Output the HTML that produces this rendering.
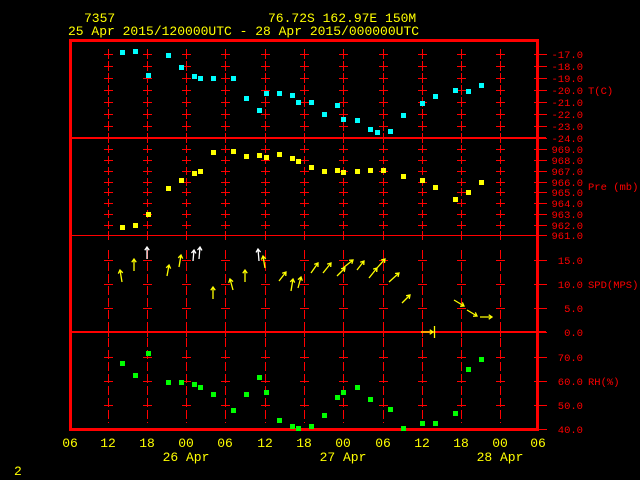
<!DOCTYPE html>
<html><head><meta charset="utf-8"><style>
html,body{margin:0;padding:0;background:#000;width:640px;height:480px;overflow:hidden}
svg{display:block}
text{font-family:"Liberation Mono",monospace}
</style></head><body>
<svg id="s" width="640" height="480" xmlns="http://www.w3.org/2000/svg">
<g id="grid" stroke="#f00" stroke-width="1" shape-rendering="crispEdges"></g>
<g stroke="#f00" fill="none" shape-rendering="crispEdges">
<rect x="70.5" y="40.5" width="467" height="389" stroke-width="3"/>
<line x1="70" y1="138" x2="546" y2="138" stroke-width="2"/>
<line x1="70" y1="235.5" x2="546" y2="235.5"/>
<line x1="70" y1="332" x2="546" y2="332" stroke-width="2"/>
</g>
<g id="pts" shape-rendering="crispEdges"></g>
<g id="arr" stroke-width="1.3" fill="none"></g>
<g font-size="13" fill="#ff0">
<text x="84" y="22">7357</text>
<text x="268" y="22">76.72S  162.97E   150M</text>
<text x="68" y="35">25 Apr 2015/120000UTC - 28 Apr 2015/000000UTC</text>
<text x="70" y="447" text-anchor="middle">06</text>
<text x="108" y="447" text-anchor="middle">12</text>
<text x="147" y="447" text-anchor="middle">18</text>
<text x="186" y="447" text-anchor="middle">00</text>
<text x="225" y="447" text-anchor="middle">06</text>
<text x="265" y="447" text-anchor="middle">12</text>
<text x="304" y="447" text-anchor="middle">18</text>
<text x="343" y="447" text-anchor="middle">00</text>
<text x="383" y="447" text-anchor="middle">06</text>
<text x="422" y="447" text-anchor="middle">12</text>
<text x="461" y="447" text-anchor="middle">18</text>
<text x="500" y="447" text-anchor="middle">00</text>
<text x="538" y="447" text-anchor="middle">06</text>
<text x="186" y="461" text-anchor="middle">26 Apr</text>
<text x="343" y="461" text-anchor="middle">27 Apr</text>
<text x="500" y="461" text-anchor="middle">28 Apr</text>
<text x="14" y="475">2</text>
</g>
<g font-size="10.5" fill="#f00" id="lab" text-anchor="end"></g>
<g font-size="10.5" fill="#f00">
<text x="588" y="94">T(C)</text>
<text x="588" y="190">Pre (mb)</text>
<text x="588" y="288">SPD(MPS)</text>
<text x="588" y="385">RH(%)</text>
</g>
</svg>
<script>
var NS="http://www.w3.org/2000/svg";
function el(p,t,a){var e=document.createElementNS(NS,t);for(var k in a)e.setAttribute(k,a[k]);p.appendChild(e);return e;}
var g=document.getElementById('grid'),lab=document.getElementById('lab');
var xs=[108,147,186,225,265,304,343,383,422,461,500];
function hx(x,y){el(g,'line',{x1:x-4,y1:y+.5,x2:x+5,y2:y+.5});}
function rows(list,half){list.forEach(function(y){xs.forEach(function(x){
 el(g,'line',{x1:x+.5,y1:y-half,x2:x+.5,y2:y+half});hx(x,y);});});}
var T=[54,66,78,90,102,114,126],P=[149,160,171,182,192,203,214,225];
rows(T,5);rows(P,4);
function vd(y1,y2){xs.forEach(function(x){el(g,'line',{x1:x+.5,y1:y1,x2:x+.5,y2:y2,'stroke-dasharray':'9 3'});});}
vd(250,332);vd(338,423);
[260,284,308,357,381,405].forEach(function(y){xs.forEach(function(x){hx(x,y);});});
xs.forEach(function(x){el(g,'line',{x1:x+.5,y1:328,x2:x+.5,y2:337});el(g,'line',{x1:x+.5,y1:231,x2:x+.5,y2:240});el(g,'line',{x1:x+.5,y1:133,x2:x+.5,y2:143});});
var L=[["-17.0",54],["-18.0",66],["-19.0",78],["-20.0",90],["-21.0",102],["-22.0",114],["-23.0",126],["-24.0",138],
["969.0",149],["968.0",160],["967.0",171],["966.0",182],["965.0",192],["964.0",203],["963.0",214],["962.0",225],["961.0",235],
["15.0",260],["10.0",284],["5.0",308],["0.0",332],["70.0",357],["60.0",381],["50.0",405],["40.0",429]];
L.forEach(function(a){el(g,'line',{x1:534,y1:a[1]+.5,x2:547,y2:a[1]+.5});var t=el(lab,'text',{x:583,y:a[1]+4});t.textContent=a[0];});
var pg=document.getElementById('pts');
function sq(list,c){list.forEach(function(p){el(pg,'rect',{x:p[0]-2,y:p[1]-2,width:5,height:5,fill:c});});}
sq([[122,52],[135,51],[148,75],[168,55],[181,67],[194,76],[200,78],[213,78],[233,78],[246,98],[259,110],[266,93],[279,93],[292,95],[298,102],[311,102],[324,114],[337,105],[343,119],[357,120],[370,129],[377,132],[390,131],[403,115],[422,103],[435,96],[455,90],[468,91],[481,85]],'#0ff');
sq([[122,227],[135,225],[148,214],[168,188],[181,180],[194,173],[200,171],[213,152],[233,151],[246,156],[259,155],[266,157],[279,154],[292,158],[298,161],[311,167],[324,171],[337,170],[343,172],[357,171],[370,170],[383,170],[403,176],[422,180],[435,187],[455,199],[468,192],[481,182]],'#ff0');
sq([[122,363],[135,375],[148,353],[168,382],[181,382],[194,384],[200,387],[213,394],[233,410],[246,394],[259,377],[266,392],[279,420],[292,426],[298,428],[311,426],[324,415],[337,397],[343,392],[357,387],[370,399],[390,409],[403,428],[422,423],[435,423],[455,413],[468,369],[481,359]],'#0f0');
var ar=document.getElementById('arr');
var A=[[122,282,120,270],[134,271,134,259],[147,259,147,247,1],[167,276,169,265],[179,267,181,255],[193,261,194,250,1],[199,259,200,247,1],[213,299,213,287],[233,290,230,279],[245,282,245,270],[259,261,258,249,1],[265,268,263,256],[279,281,286,272],[291,291,293,279],[298,288,301,277],[311,273,318,263],[323,273,331,263],[337,276,345,268],[343,268,353,260],[357,270,364,261],[369,278,377,268],[377,268,385,259],[389,282,399,273],[402,303,410,295],[454,300,464,306],[467,310,477,316],[480,317,492,317],[421,332,433,332]];
A.forEach(function(a){var c=a[4]?'#fff':'#ff0';var dx=a[2]-a[0],dy=a[3]-a[1],l=Math.hypot(dx,dy),ux=dx/l,uy=dy/l,h=4;
 var ang=0.6;function r(t){return [a[2]-h*(ux*Math.cos(t)-uy*Math.sin(t)),a[3]-h*(uy*Math.cos(t)+ux*Math.sin(t))];}
 var p1=r(ang),p2=r(-ang);
 el(ar,'path',{d:'M'+a[0]+' '+a[1]+'L'+a[2]+' '+a[3]+'M'+p1[0]+' '+p1[1]+'L'+a[2]+' '+a[3]+'L'+p2[0]+' '+p2[1],stroke:c});});
el(ar,'line',{x1:434.5,y1:326,x2:434.5,y2:338,stroke:'#ff0'});
</script>
</body></html>
